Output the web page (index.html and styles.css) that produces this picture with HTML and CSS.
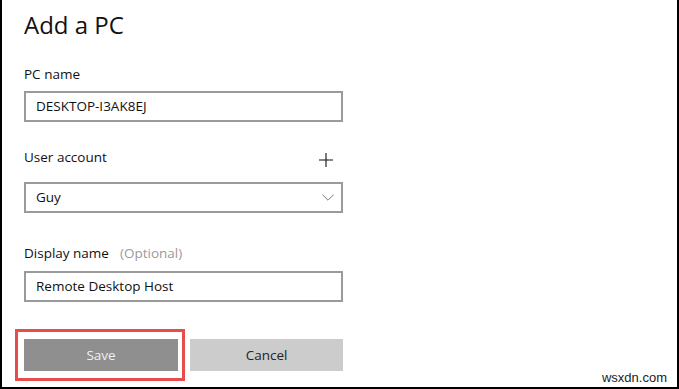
FILE: index.html
```html
<!DOCTYPE html>
<html>
<head>
<meta charset="utf-8">
<link rel="stylesheet" href="styles.css">
</head>
<body>
<div class="frame">
  <h1 class="title">Add a PC</h1>
  <div class="field first">
    <div class="label">PC name</div>
    <div class="box">DESKTOP-I3AK8EJ</div>
  </div>
  <div class="field second">
    <div class="label-row">
      <span class="label">User account</span>
      <svg class="plus" width="14" height="14" viewBox="0 0 14 14"><path d="M7 0V14M0 7H14" stroke="#111" stroke-width="1.1" fill="none"/></svg>
    </div>
    <div class="box select">
      <span>Guy</span>
      <svg class="chev" width="12" height="7" viewBox="0 0 12 7"><path d="M0.4 0.6L6 6.2L11.6 0.6" stroke="#7a7a7a" stroke-width="1" fill="none"/></svg>
    </div>
  </div>
  <div class="field third">
    <div class="label">Display name<span class="opt">(Optional)</span></div>
    <div class="box">Remote Desktop Host</div>
  </div>
  <div class="actions">
    <div class="highlight"><button class="btn save">Save</button></div>
    <button class="btn cancel">Cancel</button>
  </div>
  <div class="watermark">wsxdn.com</div>
</div>
</body>
</html>
```
FILE: styles.css
```css
html, body {
  margin: 0;
  padding: 0;
  background: #fff;
}
.frame {
  position: relative;
  width: 679px;
  height: 389px;
  box-sizing: border-box;
  border-left: 2px solid #000;
  border-right: 2px solid #000;
  border-bottom: 2px solid #000;
  padding-left: 22px;
  font-family: "Open Sans", "Noto Sans", sans-serif;
  color: #1a1a1a;
}
.title {
  margin: 0;
  padding-top: 9px;
  font-weight: 400;
  font-size: 24px;
  line-height: 32px;
  color: #111;
}
.field {
  width: 319px;
}
.field.first { margin-top: 23px; }
.field.second { margin-top: 25px; }
.field.third { margin-top: 30px; }
.label, .label-row {
  font-size: 13.5px;
  line-height: 20px;
  color: #111;
}
.label-row {
  display: flex;
  justify-content: space-between;
  align-items: flex-start;
  height: 20px;
  padding-right: 10px;
}
.plus {
  display: block;
  margin-top: 6px;
}
.opt {
  color: #9a9a9a;
  margin-left: 11px;
}
.box {
  margin-top: 7px;
  height: 31px;
  box-sizing: border-box;
  border: 2px solid #9a9a9a;
  padding: 0 10px;
  font-size: 13.5px;
  line-height: 27px;
  color: #111;
}
.third .box { margin-top: 8px; }
.select {
  margin-top: 15px;
  display: flex;
  justify-content: space-between;
  align-items: center;
  padding-right: 7px;
}
.chev { display: block; }
.actions {
  display: flex;
  align-items: center;
  margin-top: 27px;
  margin-left: -9px;
}
.highlight {
  border: 3px solid #e84d4d;
  padding: 7px 4px 7px 6px;
}
.btn {
  display: block;
  border: none;
  height: 32px;
  font-family: "Open Sans", "Noto Sans", sans-serif;
  font-size: 13.5px;
  padding: 0;
}
.save {
  width: 154px;
  background: #8f8f8f;
  color: #efefef;
}
.cancel {
  width: 153px;
  margin-left: 5px;
  background: #cccccc;
  color: #222;
}
.watermark {
  position: absolute;
  right: 10px;
  bottom: 2px;
  font-family: "Liberation Sans", Arial, sans-serif;
  font-size: 13px;
  color: #222;
}
```
